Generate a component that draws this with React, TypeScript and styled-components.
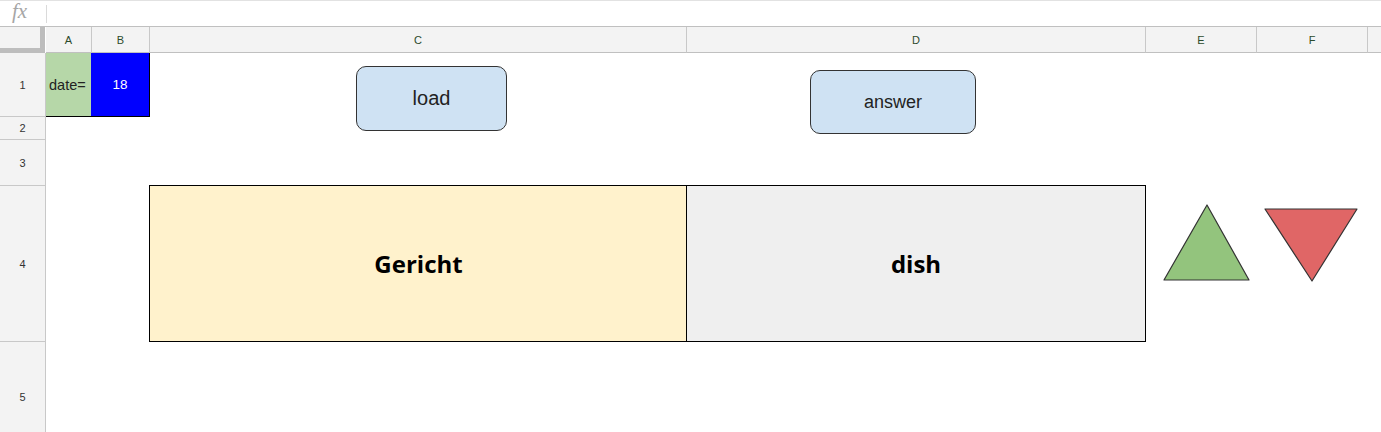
import React from "react";
import styled, { createGlobalStyle } from "styled-components";

const GlobalStyle = createGlobalStyle`
  html, body {
    margin: 0;
    padding: 0;
    background: #ffffff;
    overflow: hidden;
  }
  body {
    font-family: "Liberation Sans", Arial, sans-serif;
  }
`;

const columns = [
  { key: "A", width: 46 },
  { key: "B", width: 58 },
  { key: "C", width: 537 },
  { key: "D", width: 459 },
  { key: "E", width: 111 },
  { key: "F", width: 111 },
];

const rows = [
  { key: "1", height: 64 },
  { key: "2", height: 23 },
  { key: "3", height: 46 },
  { key: "4", height: 156 },
  { key: "5", height: 110 },
];

const BAR = 27;

const App: React.FC = () => {
  return (
    <Sheet>
      <GlobalStyle />
      <FormulaBar>
        <FxLabel>fx</FxLabel>
        <FxDivider />
      </FormulaBar>

      <Grid>
        <Corner />
        {columns.map((c) => (
          <ColHeader key={c.key}>{c.key}</ColHeader>
        ))}
        <ColHeader $last />

        {rows.map((r, i) => (
          <RowHeader key={r.key} style={{ gridRow: i + 2 }}>
            {r.key}
          </RowHeader>
        ))}

        <LabelCell>date=</LabelCell>
        <ValueCell>18</ValueCell>

        <WordCell $bg="#fff2cc" $col={4}>Gericht</WordCell>
        <WordCell $bg="#efefef" $col={5}>dish</WordCell>

        <SheetButton $left={356} $top={66} $w={151} $h={65} $size={20}>
          load
        </SheetButton>
        <SheetButton $left={810} $top={70} $w={166} $h={64} $size={18}>
          answer
        </SheetButton>

        <Arrow $left={1163} $top={204} width="88" height="78" viewBox="0 0 88 78">
          <polygon
            points="44,1 86,76 1,76"
            fill="#93c47d"
            stroke="#333"
            strokeWidth="1.2"
            strokeLinejoin="round"
          />
        </Arrow>
        <Arrow $left={1264} $top={208} width="95" height="75" viewBox="0 0 95 75">
          <polygon
            points="1,1 93,1 48,73"
            fill="#e06666"
            stroke="#333"
            strokeWidth="1.2"
            strokeLinejoin="round"
          />
        </Arrow>
      </Grid>
    </Sheet>
  );
};

const Sheet = styled.div`
  width: 1381px;
  height: 432px;
  overflow: hidden;
  background: #fff;
`;

const FormulaBar = styled.div`
  height: ${BAR}px;
  box-sizing: border-box;
  border-top: 1px solid #e2e2e2;
  border-bottom: 1px solid #c0c0c0;
  display: flex;
  align-items: center;
`;

const FxLabel = styled.span`
  width: 46px;
  padding-left: 12px;
  box-sizing: border-box;
  font-family: "Liberation Serif", "Times New Roman", serif;
  font-style: italic;
  font-size: 21px;
  color: #a6a6a6;
  margin-top: -5px;
`;

const FxDivider = styled.div`
  width: 1px;
  height: 18px;
  background: #dadada;
`;

const Grid = styled.div`
  position: relative;
  display: grid;
  grid-template-columns: 46px ${columns.map((c) => `${c.width}px`).join(" ")} 1fr;
  grid-template-rows: 26px ${rows.map((r) => `${r.height}px`).join(" ")};
`;

const Corner = styled.div`
  grid-row: 1;
  grid-column: 1;
  background: #f3f3f3;
  box-sizing: border-box;
  border-right: 5px solid #bdbdbd;
  border-bottom: 5px solid #bdbdbd;
  margin-right: 1px;
`;

const ColHeader = styled.div<{ $last?: boolean }>`
  grid-row: 1;
  background: #f3f3f3;
  box-sizing: border-box;
  border-right: ${(p) => (p.$last ? "none" : "1px solid #c8c8c8")};
  border-bottom: 1px solid #c0c0c0;
  display: flex;
  align-items: center;
  justify-content: center;
  font-size: 11px;
  color: #2b4a2b;
`;

const RowHeader = styled.div`
  grid-column: 1;
  background: #f3f3f3;
  box-sizing: border-box;
  border-right: 1px solid #c8c8c8;
  border-bottom: 1px solid #c8c8c8;
  display: flex;
  align-items: center;
  justify-content: center;
  font-size: 11px;
  color: #333;
`;

const LabelCell = styled.div`
  grid-row: 2;
  grid-column: 2;
  background: #b6d7a8;
  box-sizing: border-box;
  border-bottom: 1px solid #000;
  display: flex;
  align-items: center;
  padding-left: 3px;
  font-size: 14.5px;
  color: #222;
`;

const ValueCell = styled.div`
  grid-row: 2;
  grid-column: 3;
  background: #0000ff;
  box-sizing: border-box;
  border-right: 1px solid #000;
  border-bottom: 1px solid #000;
  margin-left: -1px;
  display: flex;
  align-items: center;
  justify-content: center;
  font-size: 13.5px;
  color: #fff;
`;

const WordCell = styled.div<{ $bg: string; $col: number }>`
  grid-row: 5;
  grid-column: ${(p) => p.$col};
  margin: -1px 0 0 -1px;
  background: ${(p) => p.$bg};
  box-sizing: border-box;
  border: 1px solid #000;
  border-right: ${(p) => (p.$col === 5 ? "1px solid #000" : "none")};
  display: flex;
  align-items: center;
  justify-content: center;
  font-family: "Open Sans", "DejaVu Sans", sans-serif;
  font-weight: 700;
  font-size: 24px;
  color: #000;
`;

const SheetButton = styled.div<{
  $left: number;
  $top: number;
  $w: number;
  $h: number;
  $size: number;
}>`
  position: absolute;
  left: ${(p) => p.$left}px;
  top: ${(p) => p.$top - BAR}px;
  width: ${(p) => p.$w}px;
  height: ${(p) => p.$h}px;
  box-sizing: border-box;
  background: #cfe2f3;
  border: 1px solid #333;
  border-radius: 10px;
  display: flex;
  align-items: center;
  justify-content: center;
  font-size: ${(p) => p.$size}px;
  color: #222;
`;

const Arrow = styled.svg<{ $left: number; $top: number }>`
  position: absolute;
  left: ${(p) => p.$left}px;
  top: ${(p) => p.$top - BAR}px;
  overflow: visible;
`;

export default App;
